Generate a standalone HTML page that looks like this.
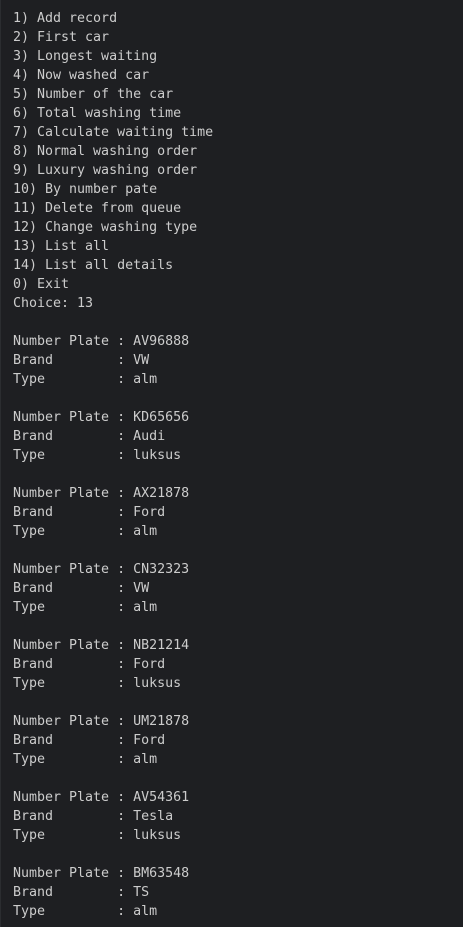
<!DOCTYPE html>
<html><head><meta charset="utf-8"><style>
html,body{margin:0;padding:0;width:463px;height:927px;overflow:hidden;background:#1e1f22;}
body{border-left:1px solid #2b2d30;box-sizing:border-box;}
pre{margin:0;padding:9px 0 0 12px;font-family:"DejaVu Sans Mono","Liberation Mono",monospace;font-size:13.3px;line-height:19px;color:#cccccc;}
</style></head><body><pre>1) Add record
2) First car
3) Longest waiting
4) Now washed car
5) Number of the car
6) Total washing time
7) Calculate waiting time
8) Normal washing order
9) Luxury washing order
10) By number pate
11) Delete from queue
12) Change washing type
13) List all
14) List all details
0) Exit
Choice: 13

Number Plate : AV96888
Brand        : VW
Type         : alm

Number Plate : KD65656
Brand        : Audi
Type         : luksus

Number Plate : AX21878
Brand        : Ford
Type         : alm

Number Plate : CN32323
Brand        : VW
Type         : alm

Number Plate : NB21214
Brand        : Ford
Type         : luksus

Number Plate : UM21878
Brand        : Ford
Type         : alm

Number Plate : AV54361
Brand        : Tesla
Type         : luksus

Number Plate : BM63548
Brand        : TS
Type         : alm
</pre></body></html>
